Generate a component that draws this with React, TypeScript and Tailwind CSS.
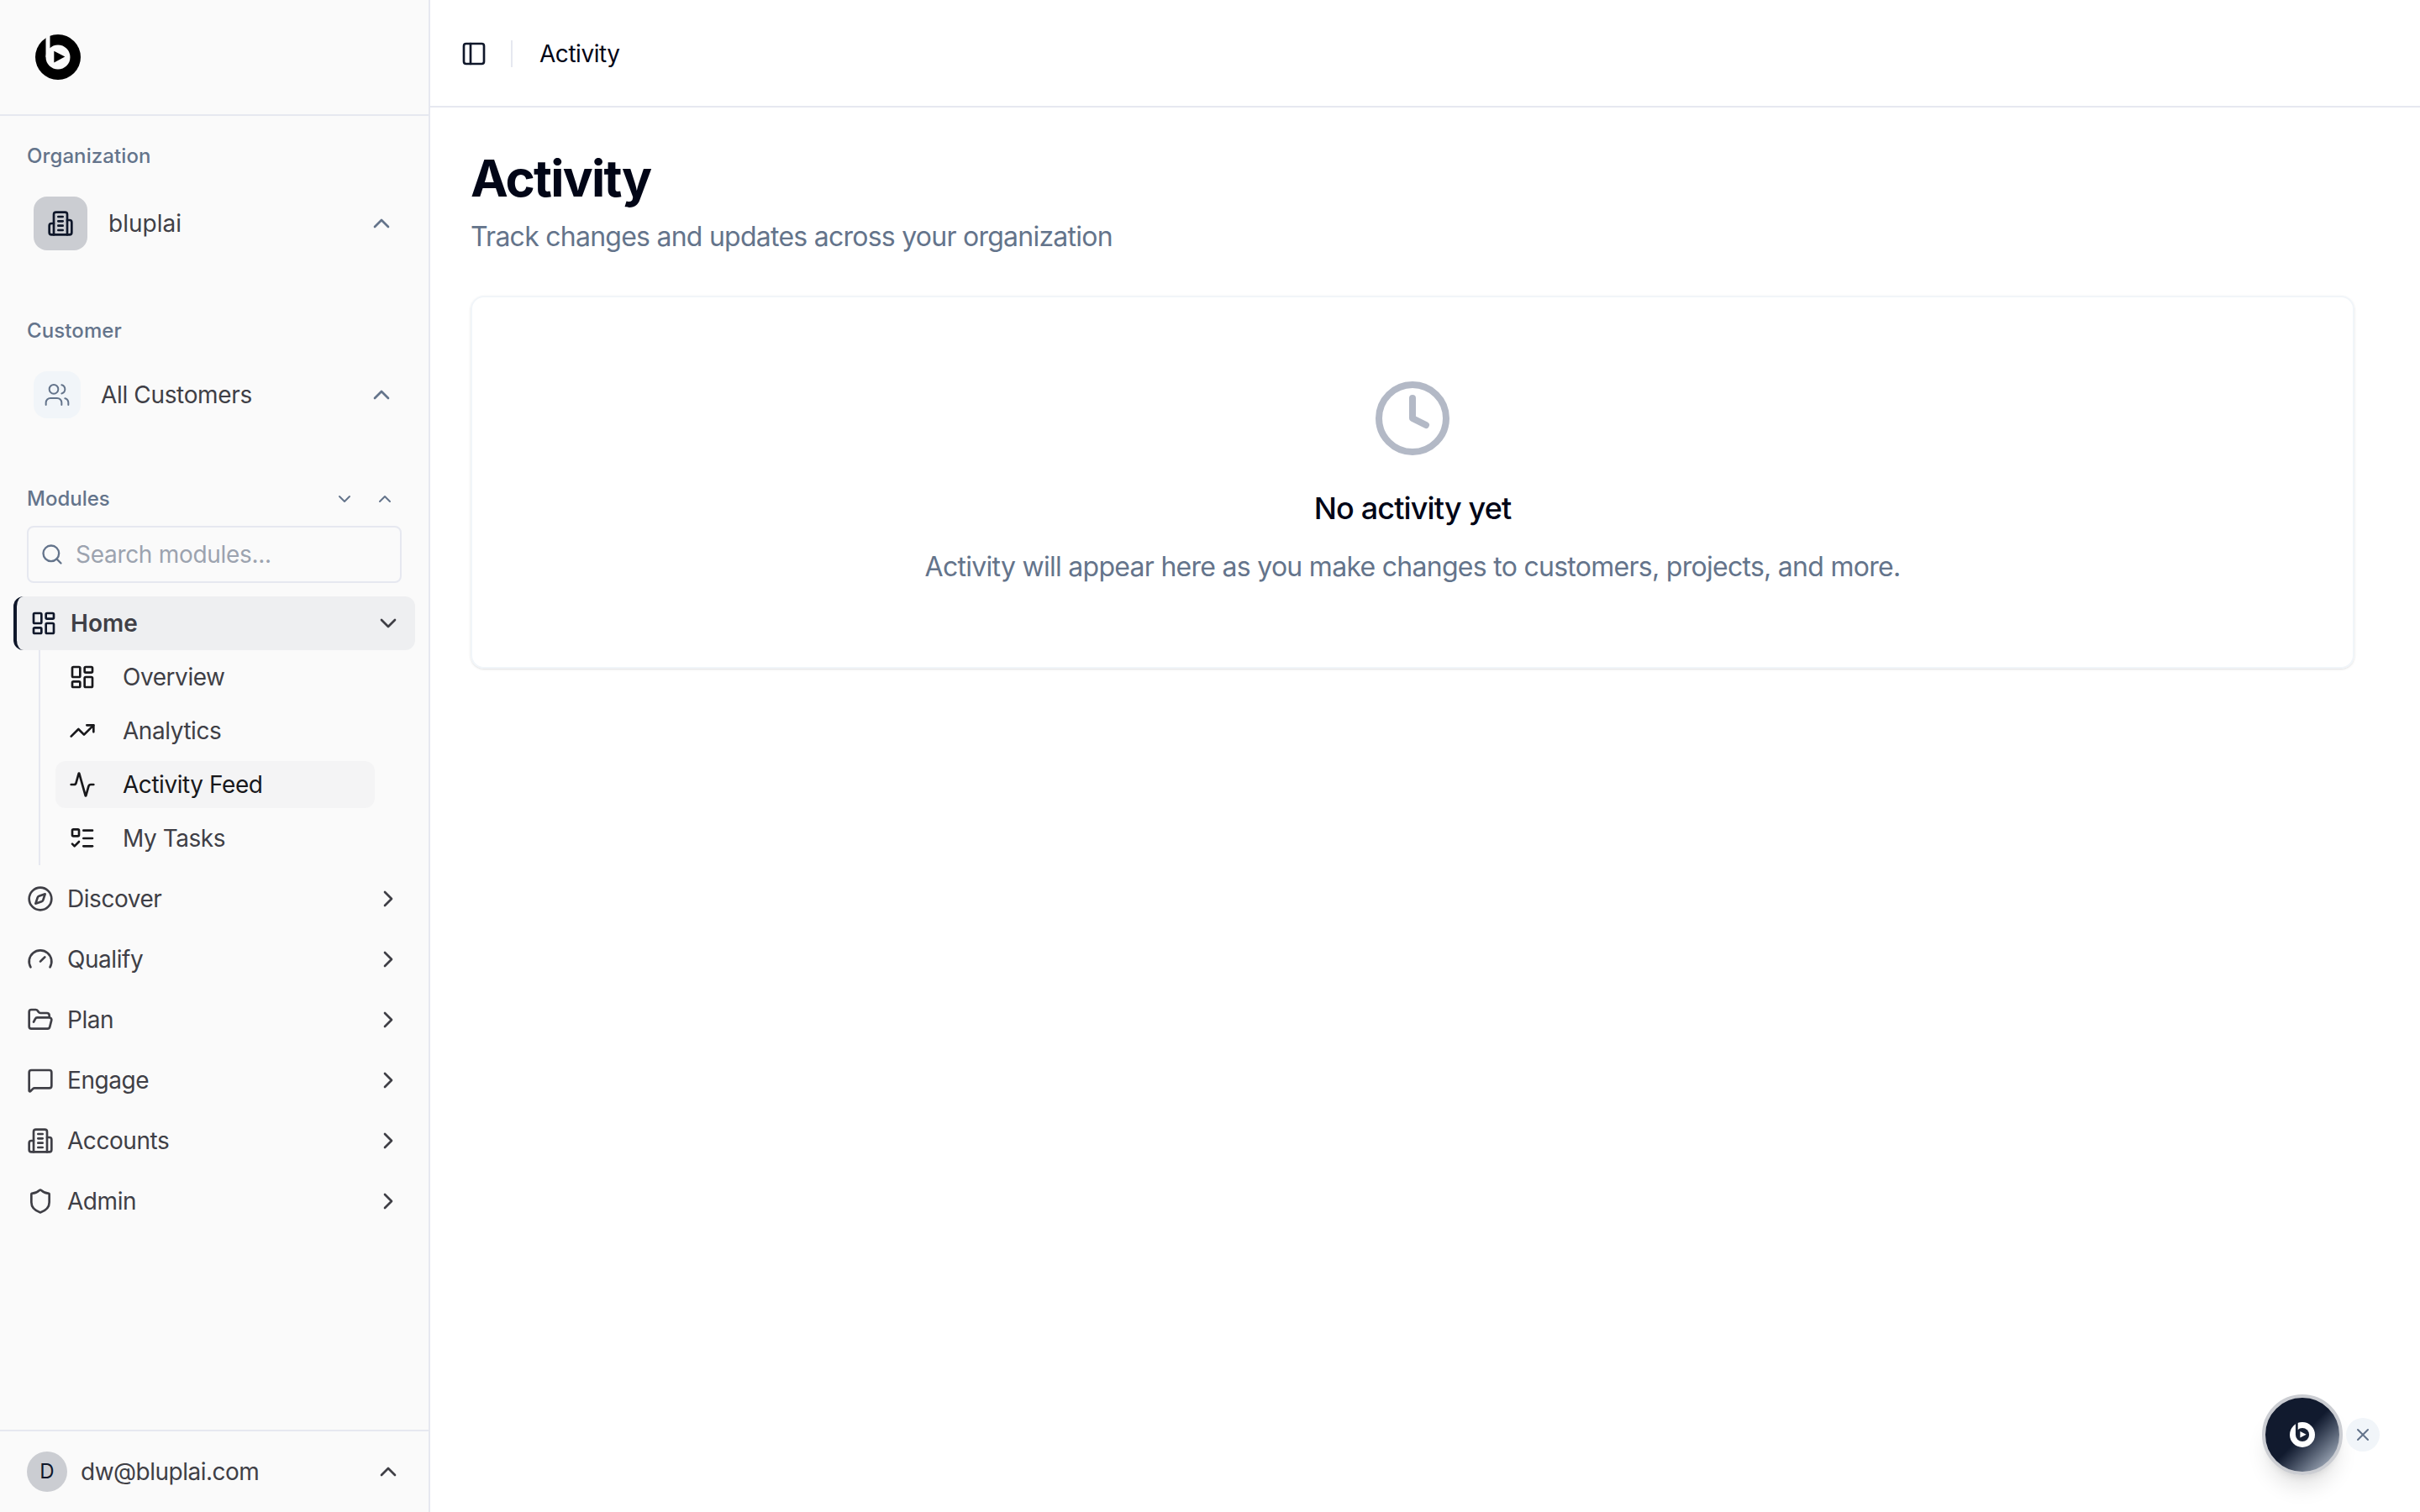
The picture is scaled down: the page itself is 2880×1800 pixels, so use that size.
import React from 'react';
import {
  ChevronDown,
  ChevronRight,
  ChevronUp,
  Clock,
  Compass,
  FolderOpen,
  Gauge,
  Activity,
  ListTodo,
  MessageSquare,
  PanelLeft,
  Search,
  Shield,
  TrendingUp,
  Users,
  X,
} from 'lucide-react';

const LayoutIcon: React.FC<{ className?: string }> = ({ className }) => (
  <svg viewBox="0 0 24 24" fill="none" stroke="currentColor" strokeWidth="2" strokeLinecap="round" strokeLinejoin="round" className={className}>
    <rect x="3" y="3" width="7" height="9" rx="1" />
    <rect x="14" y="3" width="7" height="5" rx="1" />
    <rect x="14" y="12" width="7" height="9" rx="1" />
    <rect x="3" y="16" width="7" height="5" rx="1" />
  </svg>
);

const BuildingIcon: React.FC<{ className?: string }> = ({ className }) => (
  <svg viewBox="0 0 24 24" fill="none" stroke="currentColor" strokeWidth="2" strokeLinecap="round" strokeLinejoin="round" className={className}>
    <path d="M6 22V4a2 2 0 0 1 2-2h8a2 2 0 0 1 2 2v18Z" />
    <path d="M6 12H4a2 2 0 0 0-2 2v6a2 2 0 0 0 2 2h2" />
    <path d="M18 9h2a2 2 0 0 1 2 2v9a2 2 0 0 1-2 2h-2" />
    <path d="M10 6h4" />
    <path d="M10 10h4" />
    <path d="M10 14h4" />
    <path d="M10 18h4" />
  </svg>
);

const Logo: React.FC<{ className?: string; ring: string; inner: string }> = ({ className, ring, inner }) => (
  <svg viewBox="0 0 54 54" className={className}>
    <circle cx="27" cy="27" r="27" fill={ring} />
    <circle cx="27" cy="27" r="14.5" fill={inner} />
    <rect x="12.5" y="0" width="5" height="27" fill={inner} />
    <path d="M22.3 19.7 L35.3 26.6 L22.3 33.5 Z" fill={ring} />
  </svg>
);

const subItems = [
  { label: 'Overview', icon: LayoutIcon },
  { label: 'Analytics', icon: TrendingUp },
  { label: 'Activity Feed', icon: Activity, active: true },
  { label: 'My Tasks', icon: ListTodo },
];

const modules = [
  { label: 'Discover', icon: Compass },
  { label: 'Qualify', icon: Gauge },
  { label: 'Plan', icon: FolderOpen },
  { label: 'Engage', icon: MessageSquare },
  { label: 'Accounts', icon: BuildingIcon },
  { label: 'Admin', icon: Shield },
];

const Sidebar: React.FC = () => (
  <aside className="w-[512px] h-full shrink-0 flex flex-col bg-[#fafafa] border-r-2 border-[#e6e8f0]">
    <div className="h-[138px] shrink-0 border-b-2 border-[#e6e8f0] pl-[42px] pt-[41px]">
      <Logo className="w-[54px] h-[54px]" ring="#000000" inner="#fafafa" />
    </div>

    <div className="flex-1 flex flex-col">
      {/* Organization */}
      <div className="pt-[32px] pl-[32px] text-[24px] leading-[32px] font-medium tracking-[0.1px] text-[#64748b]">Organization</div>
      <div className="mt-[32px] ml-[40px] mr-[40px] h-[64px] flex items-center">
        <div className="w-[64px] h-[64px] rounded-[16px] bg-[#cbcdd2] flex items-center justify-center text-[#0f172a]">
          <BuildingIcon className="w-[32px] h-[32px]" />
        </div>
        <span className="ml-[25px] text-[28px] leading-[40px] text-[#3f3f46]">bluplai</span>
        <ChevronUp className="ml-auto w-[32px] h-[32px] text-[#64748b]" strokeWidth={2} />
      </div>

      {/* Customer */}
      <div className="mt-[80px] pl-[32px] text-[24px] leading-[32px] font-medium tracking-[0.1px] text-[#64748b]">Customer</div>
      <div className="mt-[32px] ml-[40px] mr-[40px] h-[56px] flex items-center">
        <div className="w-[56px] h-[56px] rounded-[16px] bg-[#f1f5f9] flex items-center justify-center text-[#64748b]">
          <Users className="w-[32px] h-[32px]" strokeWidth={1.5} />
        </div>
        <span className="ml-[24px] text-[28px] leading-[40px] tracking-[-0.35px] text-[#3f3f46]">All Customers</span>
        <ChevronUp className="ml-auto w-[32px] h-[32px] text-[#64748b]" strokeWidth={2} />
      </div>

      {/* Modules */}
      <div className="mt-[80px] pl-[32px] pr-[40px] flex items-center h-[32px]">
        <span className="text-[24px] leading-[32px] font-medium text-[#64748b]">Modules</span>
        <ChevronDown className="ml-auto w-[24px] h-[24px] text-[#64748b]" strokeWidth={2} />
        <ChevronUp className="ml-[24px] w-[24px] h-[24px] text-[#64748b]" strokeWidth={2} />
      </div>

      <div className="mt-[16px] mx-[32px] h-[68px] rounded-[8px] border-2 border-[#e6e8f0] flex items-center pl-[14px]">
        <Search className="w-[28px] h-[28px] text-[#64748b]" strokeWidth={2} />
        <span className="ml-[14px] text-[28px] leading-[40px] tracking-[-0.3px] text-[#9ca3af]">Search modules...</span>
      </div>

      <div className="mt-[16px] ml-[16px] mr-[16px] h-[64px] rounded-[12px] bg-[#eeeff1] border-l-4 border-[#0f172a] flex items-center pl-[16px] pr-[16px] text-[#3f3f46]">
        <LayoutIcon className="w-[32px] h-[32px] text-[#0f172a]" />
        <span className="ml-[16px] text-[28px] leading-[40px] font-semibold">Home</span>
        <ChevronDown className="ml-auto w-[32px] h-[32px]" strokeWidth={2} />
      </div>

      <div className="ml-[46px] border-l-2 border-[#e6e8f0] pl-[18px] py-[4px] flex flex-col gap-[8px] w-[400px]">
        {subItems.map((item) => {
          const Icon = item.icon;
          return (
            <div
              key={item.label}
              className={`h-[56px] rounded-[12px] flex items-center pl-[16px] ${item.active ? 'bg-[#f4f4f5] text-[#18181b]' : 'text-[#3f3f46]'}`}
            >
              <Icon className="w-[32px] h-[32px] text-[#18181b]" strokeWidth={2} />
              <span className="ml-[32px] text-[28px] leading-[40px] tracking-[-0.45px]">{item.label}</span>
            </div>
          );
        })}
      </div>

      <div className="mt-[4px] flex flex-col">
        {modules.map((item) => {
          const Icon = item.icon;
          return (
            <div key={item.label} className="h-[72px] flex items-center pl-[32px] pr-[32px] text-[#3f3f46]">
              <Icon className="w-[32px] h-[32px]" strokeWidth={2} />
              <span className="ml-[16px] text-[28px] leading-[40px] tracking-[-0.45px]">{item.label}</span>
              <ChevronRight className="ml-auto w-[32px] h-[32px]" strokeWidth={2} />
            </div>
          );
        })}
      </div>
    </div>

    <div className="h-[98px] shrink-0 border-t-2 border-[#e6e8f0] flex items-center pl-[32px] pr-[32px]">
      <div className="w-[48px] h-[48px] rounded-full bg-[#cbcdd2] flex items-center justify-center text-[24px] text-[#0f172a]">D</div>
      <span className="ml-[16px] text-[28px] leading-[40px] tracking-[-0.5px] text-[#3f3f46]">dw@bluplai.com</span>
      <ChevronUp className="ml-auto w-[32px] h-[32px] text-[#3f3f46]" strokeWidth={2} />
    </div>
  </aside>
);

const Main: React.FC = () => (
  <main className="flex-1 h-full bg-white flex flex-col min-w-0">
    <header className="h-[128px] shrink-0 border-b-2 border-[#e6e8f0] flex items-center pl-[36px] pt-[2px]">
      <PanelLeft className="w-[32px] h-[32px] text-[#0f172a]" strokeWidth={2} />
      <div className="ml-[28px] w-[2px] h-[32px] bg-[#e6e8f0]" />
      <span className="ml-[32px] text-[28px] leading-[40px] tracking-[-0.45px] text-[#020617]">Activity</span>
    </header>

    <div className="pl-[48px] pr-[78px] pt-[48px]">
      <h1 className="text-[60px] leading-[72px] font-bold tracking-[-1.8px] text-[#020617]">Activity</h1>
      <p className="mt-[10px] text-[32px] leading-[48px] tracking-[-0.75px] text-[#64748b]">Track changes and updates across your organization</p>

      <div className="mt-[46px] h-[444px] rounded-[16px] border-2 border-[#f1f5f9] shadow-sm flex flex-col items-center pt-[96px]">
        <Clock className="w-[96px] h-[96px] text-[#b3b9c6]" strokeWidth={2} />
        <h2 className="mt-[31px] text-[36px] leading-[56px] font-medium tracking-[-0.86px] text-[#020617]">No activity yet</h2>
        <p className="mt-[18px] text-[32px] leading-[48px] tracking-[-0.72px] text-[#64748b]">Activity will appear here as you make changes to customers, projects, and more.</p>
      </div>
    </div>
  </main>
);

const Assistant: React.FC = () => (
  <div className="absolute right-[48px] bottom-[44px] flex items-center gap-[4px]">
    <div className="w-[96px] h-[96px] rounded-full border-4 border-[#cbcdd2] bg-gradient-to-br from-[#111a2e] via-[#111a2e] via-50% to-[#cbd5e1] shadow-xl flex items-center justify-center">
      <Logo className="w-[30px] h-[30px]" ring="#ffffff" inner="#172033" />
    </div>
    <div className="w-[40px] h-[40px] rounded-full bg-[#f1f5f9] flex items-center justify-center text-[#64748b]">
      <X className="w-[24px] h-[24px]" strokeWidth={2} />
    </div>
  </div>
);

export default function App() {
  return (
    <div className="relative w-[2880px] h-[1800px] flex overflow-hidden bg-white font-['Inter',sans-serif]">
      <Sidebar />
      <Main />
      <Assistant />
    </div>
  );
}
